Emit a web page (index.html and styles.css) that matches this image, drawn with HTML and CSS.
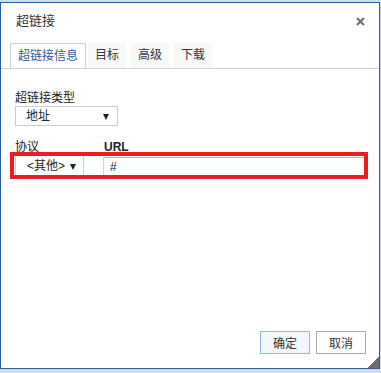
FILE: index.html
```html
<!DOCTYPE html>
<html lang="zh">
<head>
    <meta charset="UTF-8">
    <title>超链接</title>
    <link rel="stylesheet" href="styles.css">
</head>
<body>
<div class="dialog">
    <div class="title-bar">
        <span class="title">超链接</span>
        <span class="close">
            <svg width="9" height="9" viewBox="0 0 9 9"><path d="M1 1L8 8M8 1L1 8" stroke="#707070" stroke-width="2.2"/></svg>
        </span>
    </div>
    <ul class="tabs">
        <li class="current">超链接信息</li>
        <li>目标</li>
        <li>高级</li>
        <li>下载</li>
    </ul>
    <div class="panel">
        <div class="field">
            <label>超链接类型</label>
            <div class="select type">地址<i class="arrow"></i></div>
        </div>
        <div class="row">
            <div class="field">
                <label>协议</label>
                <div class="select proto">&lt;其他&gt;<i class="arrow"></i></div>
            </div>
            <div class="field grow">
                <label class="req">URL</label>
                <div class="input">#</div>
            </div>
        </div>
    </div>
    <div class="footer">
        <button class="btn ok">确定</button>
        <button class="btn">取消</button>
    </div>
    <div class="mark"></div>
    <div class="grip"></div>
</div>
</body>
</html>
```

FILE: styles.css
```css
* {
    padding: 0;
    margin: 0;
    list-style: none;
    box-sizing: border-box;
}

body {
    background: #d3dbe7;
    font-family: "Liberation Sans", "Noto Sans CJK SC", sans-serif;
    font-size: 12px;
    color: #333;
}

.dialog {
    position: relative;
    width: 380px;
    height: 367px;
    margin-top: 2px;
    border: 1px solid #2d5ca6;
    background: #fff;
    display: flex;
    flex-direction: column;
}

.title-bar {
    height: 40px;
    padding: 9px 14px 0 15px;
    display: flex;
    justify-content: space-between;
}

.title {
    font-size: 13px;
    line-height: 17px;
    color: #333;
}

.close {
    margin-top: 5px;
    width: 9px;
    height: 9px;
}

.close svg {
    display: block;
}

.tabs {
    display: flex;
    height: 26px;
    padding-left: 9px;
    border-bottom: 1px solid #d1d1d1;
}

.tabs li {
    height: 25px;
    line-height: 25px;
    padding: 0 7px;
    margin-right: 5px;
    background: #f8f8f8;
    color: #333;
}

.tabs li.current {
    background: #fff;
    border: 1px solid #cfcfcf;
    border-bottom: 0;
    color: #2c5a9e;
    margin-right: 2px;
    line-height: 24px;
}

.panel {
    padding: 22px 14px 0 14px;
}

.field label {
    display: block;
    line-height: 14px;
    color: #222;
}

.select {
    position: relative;
    margin-top: 1px;
    height: 20px;
    line-height: 18px;
    border: 1px solid #cccccc;
    background: #fff;
    color: #222;
}

.select .arrow {
    position: absolute;
    top: 7px;
    width: 0;
    height: 0;
    border-left: 3px solid transparent;
    border-right: 3px solid transparent;
    border-top: 6px solid #222;
}

.type {
    width: 103px;
    padding-left: 10px;
}

.type .arrow {
    right: 8px;
}

.proto {
    width: 69px;
    height: 23px;
    line-height: 21px;
    padding-left: 11px;
}

.proto .arrow {
    top: 8px;
    right: 7px;
}

.row {
    display: flex;
    gap: 19px;
    margin-top: 14px;
}

.grow {
    flex: 1;
}

.req {
    font-weight: bold;
    color: #1b3567;
    padding-left: 1px;
}

.input {
    margin-top: 3px;
    height: 21px;
    line-height: 19px;
    padding-left: 6px;
    border: 1px solid #d3d3d3;
    border-top-color: #b7bcc6;
    color: #222;
}

.footer {
    margin-top: auto;
    display: flex;
    justify-content: flex-end;
    gap: 6px;
    padding: 0 13px 14px 0;
}

.btn {
    width: 50px;
    height: 23px;
    font-family: inherit;
    font-size: 12px;
    color: #333;
    background: #fff;
    border: 1px solid #a9a9a9;
}

.btn.ok {
    background: #f2f7fe;
    border-color: #8fb5ec;
}

.mark {
    position: absolute;
    left: 9px;
    top: 149px;
    width: 358px;
    height: 27px;
    border: 4px solid #ec1c24;
}

.grip {
    position: absolute;
    right: 0;
    bottom: 0;
    width: 11px;
    height: 11px;
    background: linear-gradient(to bottom right, transparent 50%, #6d6d6d 50%);
}
```
